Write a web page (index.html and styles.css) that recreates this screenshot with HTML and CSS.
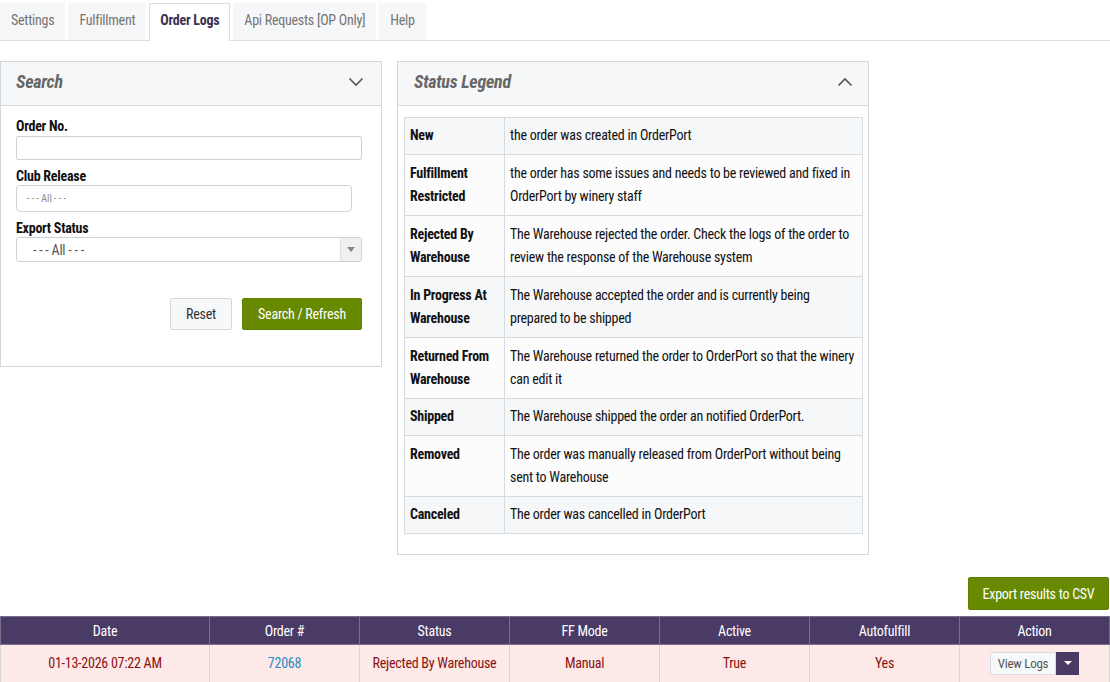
FILE: index.html
```html
<!DOCTYPE html>
<html>
<head>
<meta charset="utf-8">
<link rel="stylesheet" href="styles.css">
</head>
<body>
<ul class="tabs">
  <li class="tab">Settings</li>
  <li class="tab">Fulfillment</li>
  <li class="tab active">Order Logs</li>
  <li class="tab">Api Requests [OP Only]</li>
  <li class="tab">Help</li>
</ul>

<div class="panels">
  <section class="panel search">
    <header class="panel-head">
      <h2>Search</h2>
      <svg class="chev" width="16" height="10" viewBox="0 0 16 10"><path d="M1.5 1.5 L8 8 L14.5 1.5" fill="none" stroke="#555" stroke-width="1.6"/></svg>
    </header>
    <div class="panel-body form">
      <label class="lbl">Order No.</label>
      <div class="input"></div>
      <label class="lbl">Club Release</label>
      <div class="input rounded"><span class="ph">- - - All - - -</span></div>
      <label class="lbl">Export Status</label>
      <div class="select"><span class="sel-text">- - - All - - -</span><span class="sel-arrow"><svg width="8" height="5" viewBox="0 0 8 5"><path d="M0 0 H8 L4 5 Z" fill="#888"/></svg></span></div>
      <div class="btns">
        <span class="btn light">Reset</span>
        <span class="btn green">Search / Refresh</span>
      </div>
    </div>
  </section>

  <section class="panel legend">
    <header class="panel-head">
      <h2>Status Legend</h2>
      <svg class="chev" width="16" height="10" viewBox="0 0 16 10"><path d="M1.5 8.5 L8 2 L14.5 8.5" fill="none" stroke="#555" stroke-width="1.6"/></svg>
    </header>
    <div class="panel-body legend-body">
      <table class="ltable">
        <tr class="g s"><th>New</th><td>the order was created in OrderPort</td></tr>
        <tr><th>Fulfillment Restricted</th><td>the order has some issues and needs to be reviewed and fixed in OrderPort by winery staff</td></tr>
        <tr><th>Rejected By Warehouse</th><td>The Warehouse rejected the order. Check the logs of the order to review the response of the Warehouse system</td></tr>
        <tr class="g"><th>In Progress At Warehouse</th><td>The Warehouse accepted the order and is currently being prepared to be shipped</td></tr>
        <tr><th>Returned From Warehouse</th><td>The Warehouse returned the order to OrderPort so that the winery can edit it</td></tr>
        <tr class="g s"><th>Shipped</th><td>The Warehouse shipped the order an notified OrderPort.</td></tr>
        <tr><th>Removed</th><td>The order was manually released from OrderPort without being sent to Warehouse</td></tr>
        <tr class="g s"><th>Canceled</th><td>The order was cancelled in OrderPort</td></tr>
      </table>
    </div>
  </section>
</div>

<div class="export-row"><span class="btn green export">Export results to CSV</span></div>

<table class="results">
  <thead>
    <tr><th class="c1">Date</th><th>Order #</th><th>Status</th><th>FF Mode</th><th>Active</th><th>Autofulfill</th><th>Action</th></tr>
  </thead>
  <tbody>
    <tr>
      <td>01-13-2026 07:22 AM</td>
      <td><a class="link">72068</a></td>
      <td>Rejected By Warehouse</td>
      <td>Manual</td>
      <td>True</td>
      <td>Yes</td>
      <td><span class="split"><span class="vl">View Logs</span><span class="caret"><svg width="8" height="4" viewBox="0 0 8 4"><path d="M0 0 H8 L4 4 Z" fill="#fff"/></svg></span></span></td>
    </tr>
  </tbody>
</table>
</body>
</html>
```

FILE: styles.css
```css
* { box-sizing: border-box; }
html, body {
  margin: 0;
  padding: 0;
  background: #fff;
}
body {
  width: 1110px;
  height: 682px;
  overflow: hidden;
  font-family: "Roboto Condensed", "Roboto", "Liberation Sans", sans-serif;
  font-stretch: 75%;
  font-size: 14px;
  letter-spacing: -0.25px;
  color: #111;
}

.tabs {
  list-style: none;
  margin: 0;
  padding: 3px 0 0 0;
  display: flex;
  gap: 3px;
  border-bottom: 1px solid #dcdfe3;
  height: 41px;
}
.tab {
  background: #f6f7f9;
  color: #757575;
  font-size: 14px;
  padding: 0 10px;
  height: 37px;
  line-height: 32px;
  border: 1px solid transparent;
  border-bottom: none;
}
.tab.active {
  background: #fff;
  color: #3b3152;
  font-weight: 700;
  border-color: #d8dce0;
  height: 38px;
  margin-bottom: -1px;
}

.panels {
  display: flex;
  align-items: flex-start;
  gap: 15px;
  margin-top: 20px;
}
.panel {
  border: 1px solid #d3d8dd;
  background: #fff;
}
.search { width: 382px; }
.legend { width: 472px; }
.panel-head {
  height: 44px;
  background: #f6f7f9;
  border-bottom: 1px solid #d3d8dd;
  display: flex;
  align-items: center;
  justify-content: space-between;
  padding: 0 17px 5px 15px;
}
.panel-head h2 {
  margin: 0;
  font-size: 18px;
  font-weight: 700;
  font-style: italic;
  color: #666;
}
.chev { margin-top: 1px; }
.legend .panel-head { padding-left: 16px; padding-right: 15px; }

.form {
  padding: 11px 19px 36px 15px;
  display: flex;
  flex-direction: column;
}
.lbl {
  font-weight: 700;
  font-size: 14px;
  line-height: 18px;
  color: #111;
  margin-bottom: 0;
}
.input {
  height: 24px;
  border: 1px solid #ccd1d6;
  border-radius: 2px;
  margin-top: 1px;
  margin-bottom: 7px;
}
.input.rounded {
  height: 27px;
  width: 336px;
  margin-top: 0;
  border-radius: 4px;
  display: flex;
  align-items: center;
  padding-left: 10px;
}
.ph { font-size: 10px; color: #888; letter-spacing: 0; }
.select {
  height: 25px;
  border: 1px solid #ccd1d6;
  border-radius: 3px;
  display: flex;
  align-items: center;
  justify-content: space-between;
  padding-left: 16px;
  overflow: hidden;
}
.sel-text { font-size: 14px; color: #555; }
.sel-arrow {
  width: 21px;
  height: 100%;
  background: #eef0f2;
  border-left: 1px solid #dfe2e5;
  display: flex;
  align-items: center;
  justify-content: center;
}
.btns {
  display: flex;
  justify-content: flex-end;
  gap: 10px;
  margin-top: 36px;
}
.btn {
  display: inline-flex;
  align-items: center;
  justify-content: center;
  height: 32px;
  font-size: 14px;
  border-radius: 2px;
  white-space: nowrap;
}
.btn.light {
  width: 62px;
  background: #f7f8fa;
  border: 1px solid #d4d8dd;
  color: #333;
}
.btn.green {
  width: 120px;
  background: #688a00;
  border: 1px solid #5f7f00;
  color: #fff;
}

.legend-body { padding: 11px 5px 20px 6px; }
.ltable {
  width: 100%;
  border-collapse: collapse;
  border: 1px solid #d6dbe0;
}
.ltable th, .ltable td {
  border: 1px solid #d6dbe0;
  padding: 7px 5px;
  font-size: 14px;
  line-height: 23px;
  text-align: left;
  vertical-align: top;
  color: #111;
}
.ltable tr.s th, .ltable tr.s td { padding-top: 6px; padding-bottom: 7px; }
.ltable th {
  width: 100px;
  font-weight: 700;
}
.ltable tr { background: #fcfcfd; }
.ltable tr.g { background: #f5f7f9; }

.export-row {
  display: flex;
  justify-content: flex-end;
  margin-top: 22px;
  padding-right: 1px;
}
.btn.export { width: 141px; height: 33px; }

.results {
  margin-top: 6px;
  width: 1110px;
  border-collapse: collapse;
  table-layout: fixed;
}
.results th {
  background: #4a3a66;
  color: #fff;
  font-weight: 400;
  font-size: 14px;
  height: 28px;
  border: 1px solid #77708a;
  width: 150px;
}
.results th.c1 { width: 209px; }
.results td {
  background: #fde9e7;
  color: #8a1212;
  text-align: center;
  font-size: 14px;
  height: 37px;
  border-left: 1px solid #d9d4d6;
  border-right: 1px solid #d9d4d6;
}
.link { color: #2a8bc4; }
.split { display: inline-flex; vertical-align: middle; }
.vl {
  display: inline-flex;
  align-items: center;
  height: 23px;
  padding: 0 7px;
  background: #f7f8fa;
  border: 1px solid #d8dce0;
  color: #555;
  font-size: 13px;
}
.caret {
  width: 23px;
  height: 23px;
  background: #4a3a66;
  display: inline-flex;
  align-items: center;
  justify-content: center;
}
```
